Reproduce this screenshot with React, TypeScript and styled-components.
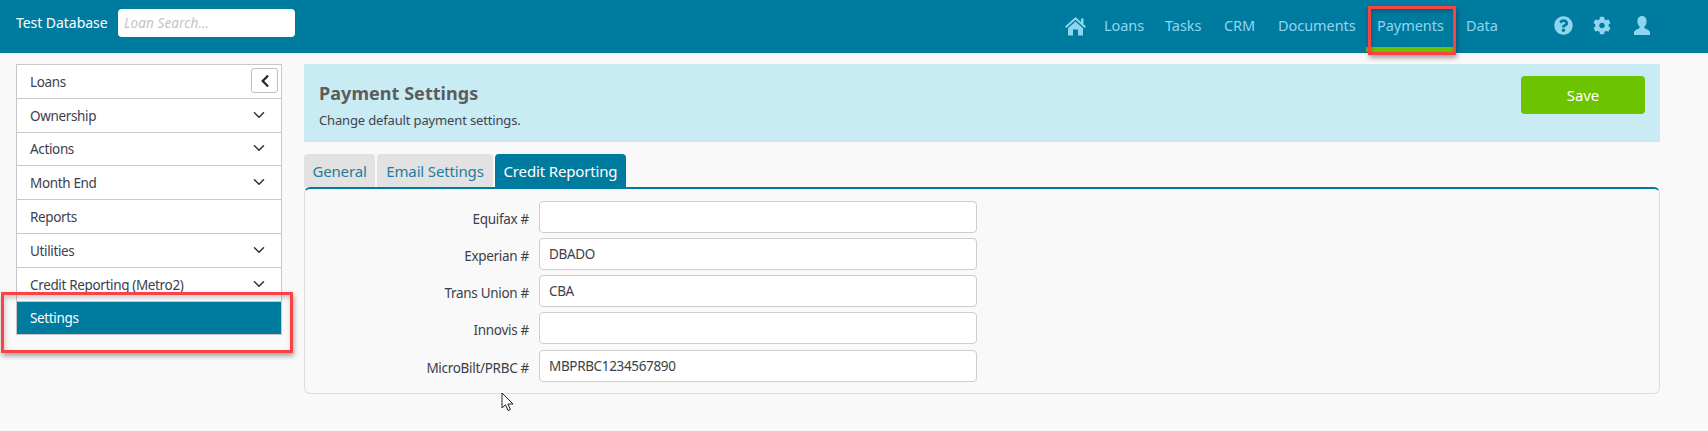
import React from "react";
import styled, { createGlobalStyle } from "styled-components";
import { FaChevronLeft, FaCog, FaQuestionCircle } from "react-icons/fa";
import { ChevronDown } from "lucide-react";

const teal = "#007ba0";
const font = `"Noto Sans", "DejaVu Sans", sans-serif`;

const Global = createGlobalStyle`
  html, body { margin: 0; padding: 0; height: 100%; background: #f9f9f9; overflow: hidden; }
  * { box-sizing: border-box; }
  body { font-family: ${font}; font-size: 14px; color: #3c3c46; }
`;

const Page = styled.div`position: relative; width: 1708px; height: 431px; overflow: hidden;`;

const Header = styled.header`
  height: 53px; background: ${teal}; display: flex; align-items: flex-start; padding-left: 16px;
`;
const Brand = styled.div`
  color: #fff; font-size: 14px; line-height: 18px; margin-top: 14px; width: 102px; letter-spacing: -0.05px;
`;
const Search = styled.input`
  width: 177px; height: 28px; margin-top: 9px; border: 0; border-radius: 4px; background: #fff; padding: 0 6px;
  font: italic 13.5px ${font}; letter-spacing: 0.1px;
  &::placeholder { color: #c4c4c4; opacity: 1; }
`;
const Nav = styled.nav`
  margin-left: auto; display: flex; align-items: flex-start; height: 53px; padding-right: 56px; color: #8ed6f0;
`;
const IconSlot = styled.span<{ $w: number; $mr?: number }>`
  display: flex; width: ${(p) => p.$w}px; margin-right: ${(p) => p.$mr ?? 0}px; margin-top: 15px; height: 21px;
  align-items: center; justify-content: center; color: #8ed6f0;
`;
const NavLink = styled.a<{ $w: number; $active?: boolean; $ml?: number }>`
  display: block; width: ${(p) => p.$w}px; height: 52px; padding: 15px 0 0 ${(p) => (p.$active ? 11 : 0)}px;
  margin-left: ${(p) => p.$ml ?? 0}px;
  line-height: 20px; font-size: 14.5px; letter-spacing: -0.05px; color: #8ed6f0;
  border-bottom: ${(p) => (p.$active ? "5px solid #6cc300" : "0")};
`;

const Body = styled.div`display: flex; align-items: flex-start; gap: 22px; padding: 11px 0 0 16px;`;

const Side = styled.aside`
  width: 266px; border: 1px solid #c8c8c8; border-bottom: 0; background: #fff; position: relative;
`;
const SideRow = styled.div<{ $active?: boolean }>`
  height: 33.8px; display: flex; align-items: center; justify-content: space-between; padding: 1px 13px 0 13px;
  border-bottom: 1px solid #c8c8c8; font-size: 13.5px; letter-spacing: -0.35px;
  background: ${(p) => (p.$active ? teal : "#fff")}; color: ${(p) => (p.$active ? "#fff" : "#3c4050")};
  svg { color: #2c3040; margin-top: -2px; }
`;
const Collapse = styled.button`
  position: absolute; top: 3px; right: 3px; width: 27px; height: 25px; padding: 0; display: flex;
  align-items: center; justify-content: center; background: #fff; border: 1px solid #c0c0c0; border-radius: 3px;
  color: #23252e;
`;

const Main = styled.main`width: 1356px;`;
const Banner = styled.section`
  height: 78px; background: #c9ebf4; display: flex; justify-content: space-between; padding: 12px 15px 0 15px;
`;
const Title = styled.h1`margin: 6px 0 0; font-size: 18px; line-height: 22px; font-weight: 700; color: #5c5c5c; letter-spacing: 0.05px;`;
const Sub = styled.p`margin: 7px 0 0; font-size: 13px; line-height: 18px; color: #3f4450; letter-spacing: -0.15px;`;
const Save = styled.button`
  width: 124px; height: 38px; border: 0; border-radius: 4px; background: #6cc300; color: #fff;
  font: 15px ${font}; letter-spacing: -0.1px;
`;
const Tabs = styled.div`display: flex; gap: 2px; margin-top: 12px; height: 33px; padding-left: 0;`;
const Tab = styled.div<{ $active?: boolean; $w: number }>`
  width: ${(p) => p.$w}px; height: 33px; display: flex; align-items: center; justify-content: center;
  border-radius: 4px 4px 0 0; font-size: 15px; letter-spacing: -0.15px;
  background: ${(p) => (p.$active ? teal : "#e2e2e2")}; color: ${(p) => (p.$active ? "#fff" : "#1c7fa0")};
`;
const Panel = styled.section`
  height: 207px; border: 1px solid #dedede; border-top: 2px solid ${teal}; border-radius: 6px;
  padding: 12px 0 0; display: flex; flex-direction: column; gap: 5px;
`;
const Field = styled.div`
  display: flex; align-items: center; gap: 10px;
  &:last-child { margin-top: 1px; }
`;
const Label = styled.label`
  width: 224px; text-align: right; font-size: 13.5px; color: #3c3f4a; letter-spacing: -0.3px; padding-top: 3px;
`;
const Input = styled.input`
  width: 438px; height: 32px; border: 1px solid #cdcdcd; border-radius: 4px; background: #fff; padding: 0 9px;
  font: 13.5px ${font}; letter-spacing: -0.35px; color: #3c3f4a;
`;

const Highlight = styled.div<{ $x: number; $y: number; $w: number; $h: number }>`
  position: absolute; left: ${(p) => p.$x}px; top: ${(p) => p.$y}px; width: ${(p) => p.$w}px; height: ${(p) => p.$h}px;
  border: 3px solid #fb4245; pointer-events: none;
  box-shadow: 1px 3px 5px rgba(0,0,0,.35), inset 1px 3px 5px rgba(0,0,0,.2);
`;
const Cursor = styled.svg`position: absolute; left: 501px; top: 392px;`;

const HomeIcon = () => (
  <svg width="21" height="20" viewBox="0 0 21 20" fill="currentColor">
    <path d="M10.500 1 L16 6V2.500h2.500v5.800L21 10.600l-1.300 1.400-9.200-8.200L1.300 12 0 10.600z" />
    <path d="M10.500 5.600 18 12.200V19.500h-5v-6H8v6H3v-7.300z" />
  </svg>
);
const UserIcon = () => (
  <svg width="20" height="20" viewBox="0 0 20 20" fill="currentColor">
    <path d="M10 0c3 0 4.600 2.300 4.600 5.200 0 2.400-1 4.100-2 5.200-.4.500-.4 1.600.3 2 1.800.9 5.100 1.800 5.100 4.200V19H2v-2.400c0-2.400 3.300-3.300 5.100-4.200.7-.4.7-1.500.3-2-1-1.100-2-2.800-2-5.200C5.400 2.300 7 0 10 0z" />
  </svg>
);

const sideItems: [string, boolean][] = [
  ["Ownership", true], ["Actions", true], ["Month End", true], ["Reports", false],
  ["Utilities", true], ["Credit Reporting (Metro2)", true],
];
const fields: [string, string][] = [
  ["Equifax #", ""], ["Experian #", "DBADO"], ["Trans Union #", "CBA"], ["Innovis #", ""],
  ["MicroBilt/PRBC #", "MBPRBC1234567890"],
];

export default function App() {
  return (
    <Page>
      <Global />
      <Header>
        <Brand>Test Database</Brand>
        <Search placeholder="Loan Search..." readOnly />
        <Nav>
          <IconSlot $w={22} $mr={18}><HomeIcon /></IconSlot>
          <NavLink $w={61}>Loans</NavLink>
          <NavLink $w={59}>Tasks</NavLink>
          <NavLink $w={54}>CRM</NavLink>
          <NavLink $w={88}>Documents</NavLink>
          <NavLink $w={89} $active>Payments</NavLink>
          <NavLink $w={87} $ml={11}>Data</NavLink>
          <IconSlot $w={20} $mr={20}><FaQuestionCircle size={19} /></IconSlot>
          <IconSlot $w={18} $mr={21}><FaCog size={19} /></IconSlot>
          <IconSlot $w={20}><UserIcon /></IconSlot>
        </Nav>
      </Header>
      <Body>
        <Side>
          <SideRow>Loans</SideRow>
          <Collapse aria-label="Collapse"><FaChevronLeft size={14} /></Collapse>
          {sideItems.map(([name, more]) => (
            <SideRow key={name}>
              {name}
              {more && <ChevronDown size={18} strokeWidth={2} />}
            </SideRow>
          ))}
          <SideRow $active>Settings</SideRow>
        </Side>
        <Main>
          <Banner>
            <div>
              <Title>Payment Settings</Title>
              <Sub>Change default payment settings.</Sub>
            </div>
            <Save>Save</Save>
          </Banner>
          <Tabs>
            <Tab $w={71}>General</Tab>
            <Tab $w={116}>Email Settings</Tab>
            <Tab $w={131} $active>Credit Reporting</Tab>
          </Tabs>
          <Panel>
            {fields.map(([label, value]) => (
              <Field key={label}>
                <Label>{label}</Label>
                <Input value={value} readOnly />
              </Field>
            ))}
          </Panel>
        </Main>
      </Body>
      <Highlight $x={1368} $y={6} $w={88} $h={49} />
      <Highlight $x={1} $y={292} $w={292} $h={61} />
      <Cursor width="13" height="20" viewBox="0 0 13 20">
        <path d="M1 1v15l3.500-3.200 2.500 5.700 2.400-1-2.500-5.500H12z" fill="#fff" stroke="#222" strokeWidth="1" />
      </Cursor>
    </Page>
  );
}
